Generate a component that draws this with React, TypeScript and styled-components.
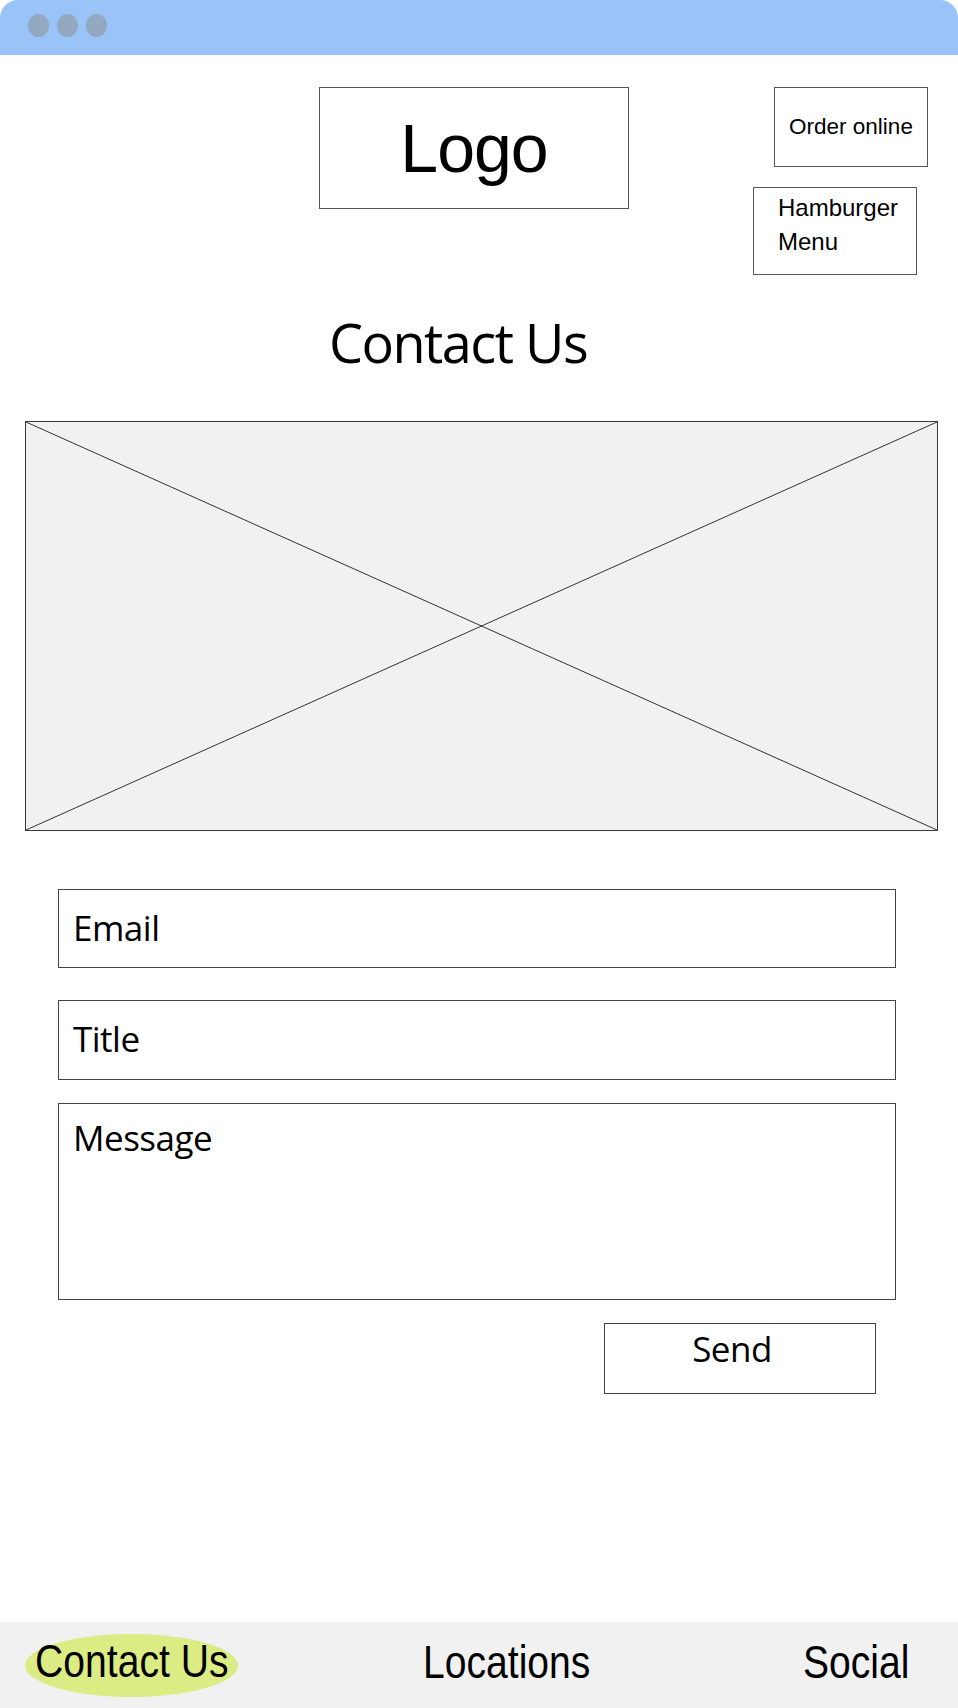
import React from 'react';
import styled, { createGlobalStyle } from 'styled-components';

const GlobalStyle = createGlobalStyle`
  html, body {
    margin: 0;
    padding: 0;
    background: #fff;
  }
  body {
    font-family: "Open Sans", "Liberation Sans", sans-serif;
    color: #000;
  }
  * {
    box-sizing: border-box;
  }
`;

const Page = styled.div`
  width: 958px;
  height: 1708px;
  display: flex;
  flex-direction: column;
  background: #fff;
  overflow: hidden;
`;

const TitleBar = styled.div`
  height: 55px;
  flex-shrink: 0;
  background: #9ac3f8;
  border-radius: 18px 18px 0 0;
  display: flex;
  align-items: center;
  gap: 8px;
  padding: 0 0 4px 28px;
`;

const WindowDot = styled.span`
  width: 21px;
  height: 23px;
  border-radius: 50%;
  background: #93a8c1;
`;

const Header = styled.header`
  display: flex;
  align-items: flex-start;
  padding: 32px 0 0 319px;
`;

const LogoBox = styled.div`
  width: 310px;
  height: 122px;
  border: 1px solid #555;
  display: flex;
  align-items: center;
  justify-content: center;
  font-family: "Liberation Sans", Arial, sans-serif;
  font-size: 68px;
  line-height: 68px;
  letter-spacing: -1px;
`;

const RightColumn = styled.div`
  margin-left: 124px;
  display: flex;
  flex-direction: column;
  gap: 20px;
`;

const OrderButton = styled.div`
  margin-left: 21px;
  width: 154px;
  height: 80px;
  border: 1px solid #555;
  display: flex;
  align-items: center;
  justify-content: center;
  font-family: "Liberation Sans", Arial, sans-serif;
  font-size: 22.5px;
  line-height: 22px;
`;

const MenuButton = styled.div`
  width: 164px;
  height: 88px;
  border: 1px solid #555;
  padding: 3px 0 0 24px;
  font-family: "Liberation Sans", Arial, sans-serif;
  font-size: 24px;
  line-height: 34px;
`;

const PageTitle = styled.h1`
  margin: 40px 0 0;
  padding-left: 329px;
  font-family: "Open Sans", sans-serif;
  font-weight: 400;
  font-size: 54px;
  line-height: 54px;
  letter-spacing: -1.5px;
`;

const ImagePlaceholder = styled.div`
  margin: 52px 0 0 25px;
  width: 913px;
  height: 410px;
  border: 1px solid #3a3a3a;
  background: #f1f1f1;

  svg {
    display: block;
    width: 100%;
    height: 100%;
  }
`;

const Form = styled.form`
  margin: 58px 0 0 58px;
  width: 838px;
  display: flex;
  flex-direction: column;
`;

const Field = styled.div<{ $height: number; $gap: number; $multiline?: boolean }>`
  height: ${p => p.$height}px;
  margin-top: ${p => p.$gap}px;
  border: 1px solid #444;
  display: flex;
  align-items: ${p => (p.$multiline ? 'flex-start' : 'center')};
  padding: ${p => (p.$multiline ? '16px 0 0' : '0 0 3px')} 14px;
  font-size: 35px;
  line-height: 35px;
  letter-spacing: -0.5px;
`;

const SendRow = styled.div`
  margin-top: 23px;
  padding-left: 546px;
  display: flex;
`;

const SendButton = styled.button`
  width: 272px;
  height: 71px;
  border: 1px solid #444;
  background: #fff;
  display: flex;
  align-items: flex-start;
  justify-content: center;
  padding: 7px 16px 0 0;
  font-family: "Open Sans", sans-serif;
  font-size: 35px;
  line-height: 35px;
  letter-spacing: -0.5px;
  color: #000;
`;

const Footer = styled.nav`
  margin-top: auto;
  height: 86px;
  flex-shrink: 0;
  background: #f1f1f1;
  display: grid;
  grid-template-columns: 213px 185px 380px auto;
  align-items: center;
  padding-left: 25px;
  font-family: "Liberation Sans", Arial, sans-serif;
  font-size: 46px;
  line-height: 46px;
`;

const ActiveTab = styled.div`
  grid-column: 1;
  height: 63px;
  border-radius: 50%;
  background: #dcec84;
  display: flex;
  align-items: center;
  justify-content: center;
  padding-bottom: 9px;
`;

const FooterLink = styled.div<{ $column: number }>`
  grid-column: ${p => p.$column};
  padding-bottom: 6px;
`;

// the wireframe's nav font is a condensed face; squeeze Liberation Sans to match
const NavText = styled.span<{ $origin: 'left' | 'center' }>`
  display: inline-block;
  flex-shrink: 0;
  white-space: nowrap;
  transform: scaleX(0.85);
  transform-origin: ${p => p.$origin} center;
`;

const App: React.FC = () => {
  return (
    <Page>
      <GlobalStyle />
      <TitleBar>
        <WindowDot />
        <WindowDot />
        <WindowDot />
      </TitleBar>

      <Header>
        <LogoBox>Logo</LogoBox>
        <RightColumn>
          <OrderButton>Order online</OrderButton>
          <MenuButton>
            Hamburger
            <br />
            Menu
          </MenuButton>
        </RightColumn>
      </Header>

      <PageTitle>Contact Us</PageTitle>

      <ImagePlaceholder>
        <svg viewBox="0 0 100 100" preserveAspectRatio="none">
          <line x1="0" y1="0" x2="100" y2="100" stroke="#333" strokeWidth="1" vectorEffect="non-scaling-stroke" />
          <line x1="100" y1="0" x2="0" y2="100" stroke="#333" strokeWidth="1" vectorEffect="non-scaling-stroke" />
        </svg>
      </ImagePlaceholder>

      <Form onSubmit={e => e.preventDefault()}>
        <Field $height={79} $gap={0}>Email</Field>
        <Field $height={80} $gap={32}>Title</Field>
        <Field $height={197} $gap={23} $multiline>Message</Field>
        <SendRow>
          <SendButton type="submit">Send</SendButton>
        </SendRow>
      </Form>

      <Footer>
        <ActiveTab>
          <NavText $origin="center">Contact Us</NavText>
        </ActiveTab>
        <FooterLink $column={3}>
          <NavText $origin="left">Locations</NavText>
        </FooterLink>
        <FooterLink $column={4}>
          <NavText $origin="left">Social</NavText>
        </FooterLink>
      </Footer>
    </Page>
  );
};

export default App;
